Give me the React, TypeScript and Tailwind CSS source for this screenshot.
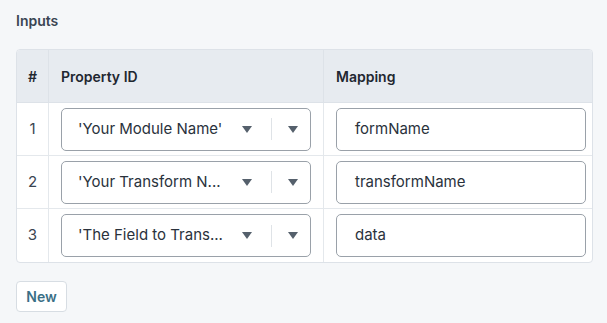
import React from 'react';

const rows = [
  { id: 1, prop: "'Your Module Name'", map: 'formName' },
  { id: 2, prop: "'Your Transform N...", map: 'transformName' },
  { id: 3, prop: "'The Field to Trans...", map: 'data' },
];

function Caret() {
  return (
    <svg width="10" height="7" viewBox="0 0 10 7" className="shrink-0">
      <path d="M0 0 L10 0 L5 7 Z" fill="#55606c" />
    </svg>
  );
}

export default function App() {
  return (
    <div
      className="w-[607px] h-[323px] bg-[#f5f7f9] px-4 pt-[11px] text-[#2a323c]"
      style={{ fontFamily: 'Inter, "Noto Sans", sans-serif' }}
    >
      <div className="text-[14px] font-semibold text-[#3a4552] leading-[20px]">Inputs</div>

      <div className="mt-[18px] w-[577px] border border-[#dde2e8] rounded-[4px] bg-white overflow-hidden">
        <div className="grid grid-cols-[32px_275px_1fr] bg-[#e7ebf0] h-[53px] border-b border-[#dde2e8] text-[14px] font-semibold text-[#1f2730]">
          <div className="flex items-center justify-center border-r border-[#dde2e8]">#</div>
          <div className="flex items-center pl-[12px] border-r border-[#dde2e8]">Property ID</div>
          <div className="flex items-center pl-[12px]">Mapping</div>
        </div>
        {rows.map((r, i) => (
          <div
            key={r.id}
            className={
              'grid grid-cols-[32px_275px_1fr] h-[53px] ' +
              (i < rows.length - 1 ? 'border-b border-[#e4e8ec]' : '')
            }
          >
            <div className="flex items-center justify-center border-r border-[#e4e8ec] text-[15px] text-[#3a4450]">
              {r.id}
            </div>
            <div className="flex items-center px-[12px] border-r border-[#e4e8ec]">
              <div className="flex items-center w-full h-[43px] border border-[#9aa1a9] rounded-[5px] pl-[16px] pr-[12px]">
                <span className="flex-1 text-[15px] text-[#2a323c] whitespace-nowrap">{r.prop}</span>
                <Caret />
                <div className="w-px h-[22px] bg-[#dfe3e7] ml-[19px] mr-[16px]" />
                <Caret />
              </div>
            </div>
            <div className="flex items-center pl-[12px] pr-[6px]">
              <div className="flex items-center w-full h-[43px] border border-[#9aa1a9] rounded-[5px] pl-[18px] text-[15px] text-[#2a323c]">
                {r.map}
              </div>
            </div>
          </div>
        ))}
      </div>

      <button className="mt-[18px] h-[31px] w-[51px] bg-white border border-[#d7dde3] rounded-[4px] text-[14px] font-semibold text-[#3a6f86]">
        New
      </button>
    </div>
  );
}
